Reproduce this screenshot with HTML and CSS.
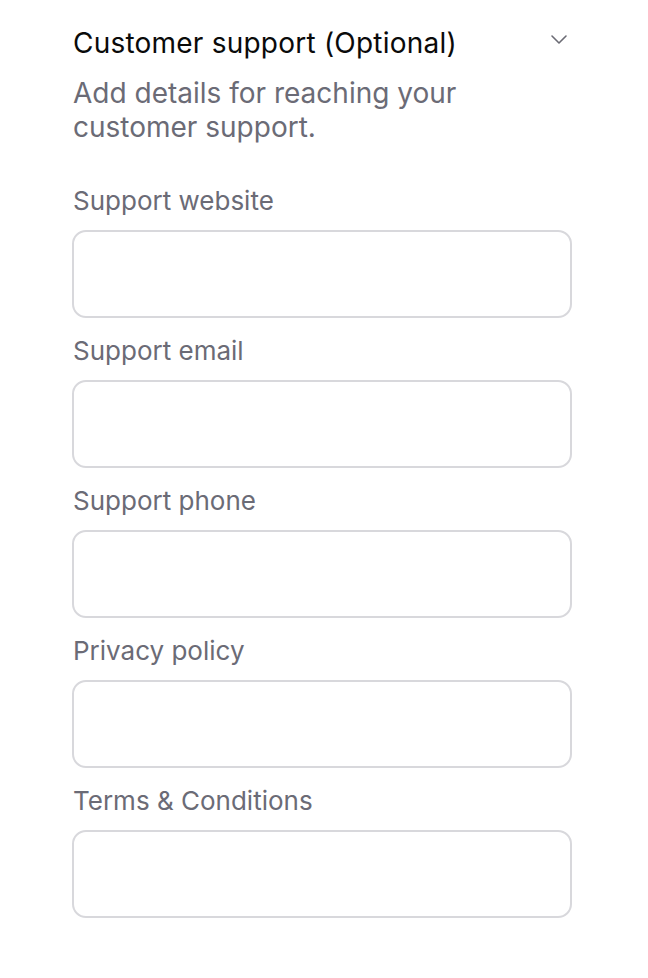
FILE: index.html
```html
<!DOCTYPE html>
<html>
<head>
<meta charset="utf-8">
<link rel="stylesheet" href="styles.css">
</head>
<body>
<section class="panel">
  <div class="header">
    <h2 class="title">Customer support (Optional)</h2>
    <svg class="chevron" width="18" height="12" viewBox="0 0 18 12"><path d="M2 3 L9 10 L16 3" fill="none" stroke="#6b6b74" stroke-width="1.6" stroke-linecap="round" stroke-linejoin="round"/></svg>
  </div>
  <p class="desc">Add details for reaching your<br>customer support.</p>
  <div class="fields">
    <label class="field"><span class="label">Support website</span><span class="input"></span></label>
    <label class="field"><span class="label">Support email</span><span class="input"></span></label>
    <label class="field"><span class="label">Support phone</span><span class="input"></span></label>
    <label class="field"><span class="label">Privacy policy</span><span class="input"></span></label>
    <label class="field"><span class="label">Terms &amp; Conditions</span><span class="input"></span></label>
  </div>
</section>
</body>
</html>
```
FILE: styles.css
```css
html, body {
  margin: 0;
  padding: 0;
  background: #ffffff;
}
body {
  font-family: Inter, "Noto Sans", sans-serif;
}
.panel {
  width: 500px;
  padding: 26px 0 0 72px;
}
.header {
  display: flex;
  justify-content: space-between;
  align-items: flex-start;
}
.title {
  margin: 0;
  font-size: 28px;
  line-height: 34px;
  font-weight: 400;
  letter-spacing: 0.22px;
  color: #0a0a0a;
  padding-left: 1px;
}
.chevron {
  margin-top: 7px;
  margin-right: 4px;
}
.desc {
  margin: 16px 0 0 0;
  font-size: 28px;
  line-height: 34px;
  color: #6b6b76;
  padding-left: 1px;
}
.fields {
  display: flex;
  flex-direction: column;
  gap: 17px;
  margin-top: 41px;
}
.field {
  display: flex;
  flex-direction: column;
  gap: 13px;
}
.label {
  font-size: 26px;
  line-height: 32px;
  color: #6b6b76;
  padding-left: 1px;
}
.input {
  display: block;
  height: 84px;
  border: 2px solid #d8d8dc;
  border-radius: 14px;
  background: #fff;
}
```
